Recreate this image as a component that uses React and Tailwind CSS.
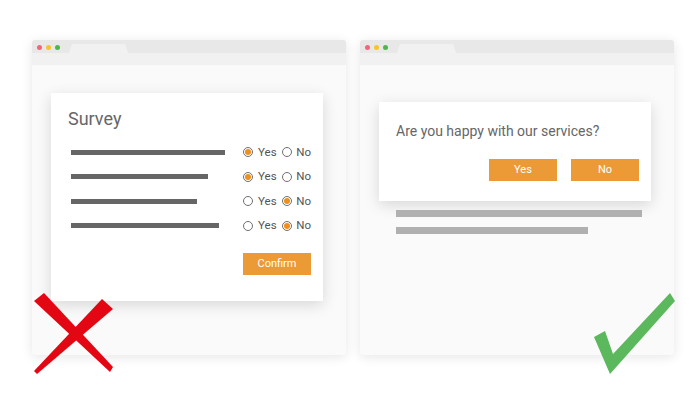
import React from 'react'

const font = { fontFamily: 'Roboto, "Liberation Sans", sans-serif' }

const rows = [
  { w: 'w-[154px]', yes: true },
  { w: 'w-[137px]', yes: true },
  { w: 'w-[126px]', yes: false },
  { w: 'w-[148px]', yes: false },
]

function Radio({ on }) {
  return (
    <span className="w-[10px] h-[10px] rounded-full border border-[#6f6f6f] flex items-center justify-center shrink-0">
      {on && <span className="w-[6px] h-[6px] rounded-full bg-[#ef8f1c]" />}
    </span>
  )
}

function Window({ children }) {
  return (
    <div className="w-[314px] h-[315px] rounded-[3px] bg-[#fafafa] shadow-[0_2px_12px_rgba(0,0,0,0.10)] overflow-hidden flex flex-col">
      <div className="h-[13px] bg-[#e8e8e8] flex items-end relative">
        <div className="absolute left-[5px] top-[5px] flex gap-[4px]">
          <span className="w-[5px] h-[5px] rounded-full bg-[#f0677b]" />
          <span className="w-[5px] h-[5px] rounded-full bg-[#f7c52b]" />
          <span className="w-[5px] h-[5px] rounded-full bg-[#4db848]" />
        </div>
        <div className="ml-[37px] w-[59px] h-[9px] bg-[#f1f1f1] [clip-path:polygon(3px_0,calc(100%-3px)_0,100%_100%,0_100%)]" />
      </div>
      <div className="h-[12px] bg-[#f1f1f1]" />
      {children}
    </div>
  )
}

function Btn({ children }) {
  return (
    <div className="w-[68px] h-[22px] bg-[#ec9a36] text-white text-[11px] flex items-center justify-center">
      {children}
    </div>
  )
}

export default function App() {
  return (
    <div className="relative w-[700px] h-[400px] bg-white" style={font}>
      <div className="flex gap-[14px] pl-[32px] pt-[40px]">
        <Window>
          <div className="ml-[19px] mt-[28px] w-[272px] h-[208px] bg-white shadow-[0_4px_14px_rgba(0,0,0,0.14)] pl-[17px] pr-[12px] pt-[14px]">
            <div className="text-[18px] leading-[24px] text-[#666]">Survey</div>
            <div className="mt-[9px] flex flex-col">
              {rows.map((r, i) => (
                <div key={i} className="h-[24.5px] flex items-center justify-between">
                  <div className={`${r.w} h-[5px] bg-[#666] ml-[3px]`} />
                  <div className="w-[68px] flex items-center text-[11.5px] text-[#555]">
                    <Radio on={r.yes} />
                    <span className="ml-[5px] w-[25px]">Yes</span>
                    <Radio on={!r.yes} />
                    <span className="ml-[4px]">No</span>
                  </div>
                </div>
              ))}
            </div>
            <div className="flex justify-end mt-[15px]">
              <Btn>Confirm</Btn>
            </div>
          </div>
        </Window>
        <Window>
          <div className="ml-[19px] mt-[37px] w-[272px] h-[99px] bg-white shadow-[0_4px_14px_rgba(0,0,0,0.14)] pl-[17px] pr-[12px] pt-[19px]">
            <div className="text-[14px] leading-[20px] text-[#666]">Are you happy with our services?</div>
            <div className="flex justify-end gap-[14px] mt-[18px]">
              <Btn>Yes</Btn>
              <Btn>No</Btn>
            </div>
          </div>
          <div className="ml-[36px] mt-[9px] w-[246px] h-[7px] bg-[#b0b0b0]" />
          <div className="ml-[36px] mt-[10px] w-[192px] h-[7px] bg-[#b0b0b0]" />
        </Window>
      </div>
      <svg className="absolute left-0 top-0" width="700" height="400">
        <polygon points="34,301 44,293 113,367 110,372" fill="#e30613" />
        <polygon points="102,299 113,309 37,374 34,371" fill="#e30613" />
        <polygon points="594,337 605,331 613,354 670,293 675,301 610,374" fill="#5cb85c" />
      </svg>
    </div>
  )
}
